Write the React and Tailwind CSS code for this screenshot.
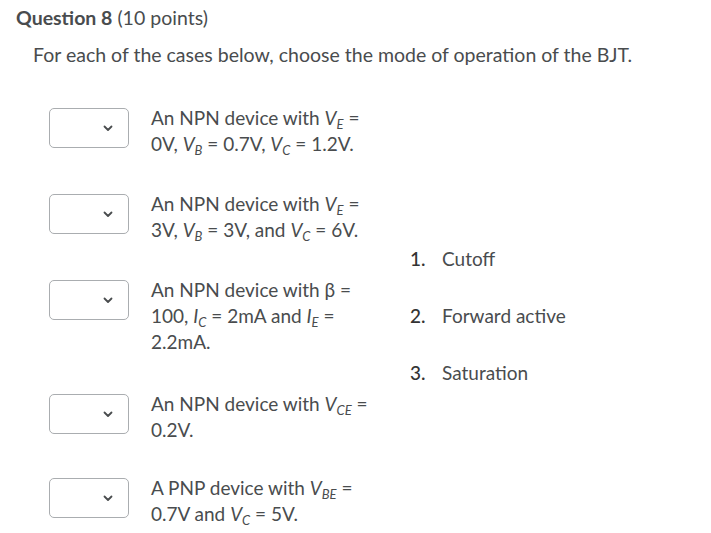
const V = ({ sub }) => (
  <span className="italic">
    V<span className="text-[13px] italic relative top-[4px] align-baseline leading-none">{sub}</span>
  </span>
);

const I = ({ sub }) => (
  <span className="italic">
    I<span className="text-[13px] italic relative top-[4px] align-baseline leading-none">{sub}</span>
  </span>
);

function Select() {
  return (
    <div className="w-[80px] h-[40px] shrink-0 rounded-[5px] border border-[#aaadb0] bg-white flex items-center justify-end pr-[15px] mt-[3px]">
      <svg width="10" height="7" viewBox="0 0 10 7" fill="none">
        <path d="M1.5 1.5L5 5L8.5 1.5" stroke="#494c4e" strokeWidth="1.8" strokeLinecap="round" strokeLinejoin="round" />
      </svg>
    </div>
  );
}

const cases = [
  { h: 'mb-[34px]', lines: [<>An NPN device with <V sub="E" /> =</>, <>0V, <V sub="B" /> = 0.7V, <V sub="C" /> = 1.2V.</>] },
  { h: 'mb-[34px]', lines: [<>An NPN device with <V sub="E" /> =</>, <>3V, <V sub="B" /> = 3V, and <V sub="C" /> = 6V.</>] },
  { h: 'mb-[36px]', lines: [<>An NPN device with β =</>, <>100, <I sub="C" /> = 2mA and <I sub="E" /> =</>, <>2.2mA.</>] },
  { h: 'mb-[32px]', lines: [<>An NPN device with <V sub="CE" /> =</>, <>0.2V.</>] },
  { h: '', lines: [<>A PNP device with <V sub="BE" /> =</>, <>0.7V and <V sub="C" /> = 5V.</>] },
];

const options = ['Cutoff', 'Forward active', 'Saturation'];

export default function App() {
  return (
    <div className="w-[711px] h-[533px] bg-white text-[#494c4e] overflow-hidden" style={{ fontFamily: 'Lato, "Open Sans", sans-serif' }}>
      <div className="pl-[16px] pt-[6px] text-[19.5px] leading-[24px]">
        <span className="font-bold">Question 8</span> (10 points)
      </div>
      <div className="pl-[33px] pt-[13px] text-[19.5px] leading-[24px]">
        For each of the cases below, choose the mode of operation of the BJT.
      </div>
      <div className="flex pl-[49px] pt-[38px]">
        <div className="flex flex-col w-[361px]">
          {cases.map((c, i) => (
            <div key={i} className={`flex items-start gap-[22px] ${c.h}`}>
              <Select />
              <div className="text-[19px] leading-[26px] whitespace-nowrap">
                {c.lines.map((l, j) => (
                  <div key={j}>{l}</div>
                ))}
              </div>
            </div>
          ))}
        </div>
        <ol className="flex flex-col gap-[31px] pt-[141px] text-[19px] leading-[26px]">
          {options.map((o, i) => (
            <li key={o} className="flex">
              <span className="w-[32px] text-[#333] font-medium">{i + 1}.</span>
              <span>{o}</span>
            </li>
          ))}
        </ol>
      </div>
    </div>
  );
}
